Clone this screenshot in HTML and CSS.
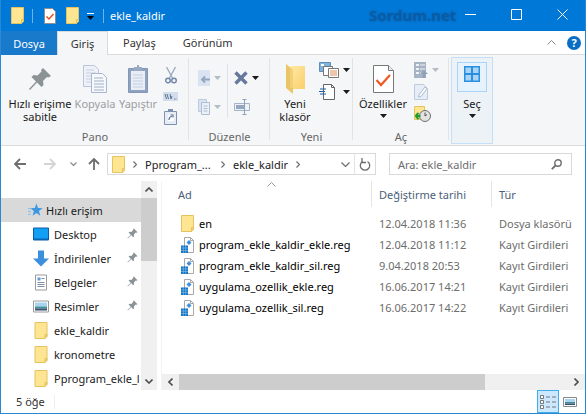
FILE: index.html
```html
<!DOCTYPE html>
<html lang="tr">
<head>
  <meta charset="UTF-8" />
  <title>ekle_kaldir</title>
  <link rel="stylesheet" href="styles.css">
</head>
<body>

  <!-- shared icons -->
  <svg class="defs">
    <symbol id="folder" viewBox="0 0 13 17">
      <path d="M.5.500h12v14h-2v2H.5z" fill="#fde592" stroke="#e6c35e"/>
      <path d="M10.500 16.500v-4h2v2z" fill="#f3d27a" stroke="#e6c35e"/>
    </symbol>
    <symbol id="reg" viewBox="0 0 13 16">
      <path d="M3.500.500h6l3 3v12h-9z" fill="#fff" stroke="#a8a8a8"/>
      <path d="M9.500.5v3h3" fill="none" stroke="#a8a8a8"/>
      <path d="M8 3l2.500 2.500-2.500 2.500-2.500-2.500z" fill="#3c8fd8"/>
      <path d="M0 8.500h7v7.500H0z" fill="#1273c4"/>
      <path d="M2.300 8.500v7.500M4.700 8.500v7.500M0 11h7M0 13.500h7" stroke="#8cc4ee" stroke-width=".6"/>
    </symbol>
    <symbol id="pin" viewBox="0 0 24 24">
      <path d="M15 1l8 8-2.500 1.500-1.500-.5-4 4 .5 4-2 2-4.500-4.500L2 23l-1-1 7-7.500L3.500 10l2-2 4 .5 4-4-.5-1.500z" fill="#8c9396"/>
    </symbol>
    <symbol id="caret" viewBox="0 0 7 4">
      <path d="M0 0h7L3.500 4z" fill="#1a1a1a"/>
    </symbol>
    <symbol id="caret-off" viewBox="0 0 7 4">
      <path d="M0 0h7L3.500 4z" fill="#b4bcc6"/>
    </symbol>
  </svg>

  <div class="window">

    <!-- Title bar -->
    <div class="titlebar">
      <svg class="qa-folder"><use href="#folder"/></svg>
      <span class="qa-sep"></span>
      <svg class="qa-doc" viewBox="0 0 12 16">
        <path d="M.5.500h8l3 3v12H.5z" fill="#fff" stroke="#8f8f8f"/>
        <path d="M2.500 8.500l2.500 2.500 4.500-5" fill="none" stroke="#e0531f" stroke-width="1.500"/>
      </svg>
      <svg class="qa-folder2"><use href="#folder"/></svg>
      <svg class="qa-drop" viewBox="0 0 7 8">
        <path d="M0 0h7v1H0z" fill="#fff"/>
        <path d="M0 3h7L3.500 7z" fill="#000"/>
      </svg>
      <span class="qa-sep qa-sep2"></span>
      <span class="title-text">ekle_kaldir</span>
      <span class="watermark">Sordum.net</span>
      <div class="winbtns">
        <svg viewBox="0 0 11 11"><path d="M0 5.500h11" stroke="#fff"/></svg>
        <svg viewBox="0 0 11 11"><path d="M.5.500h10v10H.5z" fill="none" stroke="#fff"/></svg>
        <svg viewBox="0 0 11 11"><path d="M.5.500l10 10M10.500.5l-10 10" stroke="#fff"/></svg>
      </div>
    </div>

    <!-- Tabs -->
    <div class="tabs">
      <div class="tab tab-file">Dosya</div>
      <div class="tab tab-active">Giriş</div>
      <div class="tab tab-share">Paylaş</div>
      <div class="tab tab-view">Görünüm</div>
      <svg class="collapse" viewBox="0 0 9 5"><path d="M.5 4.500l4-4 4 4" fill="none" stroke="#8a8a8a"/></svg>
      <div class="help">?</div>
    </div>

    <!-- Ribbon -->
    <div class="ribbon">

      <div class="group group-pano">
        <div class="group-body">
          <div class="tool tool-pin">
            <div class="tool-icon"><svg class="icon-24"><use href="#pin"/></svg></div>
            <span>Hızlı erişime sabitle</span>
          </div>
          <div class="tool tool-copy off">
            <div class="tool-icon">
              <svg class="icon-copy" viewBox="0 0 24 28">
                <path d="M.5.500h11l4 4v17H.5z" fill="#eef2f8" stroke="#b9c6da"/>
                <path d="M3 5h8M3 8h10M3 11h10M3 14h10M3 17h10" stroke="#c6d0e0"/>
                <path d="M8.500 8.500h11l4 4v15h-15z" fill="#f6f8fb" stroke="#a9b8d0"/>
                <path d="M11 13h9M11 16h10M11 19h10M11 22h10M11 25h10" stroke="#9fb0ca"/>
              </svg>
            </div>
            <span>Kopyala</span>
          </div>
          <div class="tool tool-paste off">
            <div class="tool-icon">
              <svg class="icon-paste" viewBox="0 0 20 28">
                <path d="M.5 3.500h19v24H.5z" fill="#8fa2c0" stroke="#8397b7"/>
                <path d="M3 6h14v19H3z" fill="#e9eef6"/>
                <path d="M5 10h10M5 13h10M5 16h10M5 19h10M5 22h10" stroke="#c3cfe2"/>
                <path d="M6 2h3V0h2v2h3v4H6z" fill="#9aaac4"/>
              </svg>
            </div>
            <span>Yapıştır</span>
          </div>
          <div class="small-col small-pano">
            <svg class="icon-cut" viewBox="0 0 12 17">
              <path d="M1.500 0l6 11M10.500 0l-6 11" stroke="#9aa8bd" stroke-width="1.300" fill="none"/>
              <circle cx="3" cy="13.500" r="2.300" fill="none" stroke="#6f86a8" stroke-width="1.400"/>
              <circle cx="9" cy="13.500" r="2.300" fill="none" stroke="#6f86a8" stroke-width="1.400"/>
            </svg>
            <svg class="icon-path" viewBox="0 0 15 9">
              <path d="M0 0h15v9H0z" fill="#d3ddeb"/>
              <path d="M2 2l1.500 5M4 2l1.500 5M7 2l1 5 1-3" fill="none" stroke="#5c7496"/>
              <path d="M11 7h.8M12.500 7h.8" stroke="#5c7496"/>
            </svg>
            <svg class="icon-short" viewBox="0 0 13 16">
              <path d="M.5 2.500h12v13H.5z" fill="#e8edf5" stroke="#7d92b2"/>
              <path d="M4 0h5v3H4z" fill="#7d92b2"/>
              <path d="M4 6h6v6H4z" fill="#fff"/>
              <path d="M5 11c0-2.500 1-3.500 3-3.500M6.500 6h2.500v2.500" fill="none" stroke="#5a7398" stroke-width="1.200"/>
            </svg>
          </div>
        </div>
        <div class="group-label">Pano</div>
      </div>

      <div class="group group-edit">
        <div class="group-body">
          <div class="small-col edit-col">
            <div class="small-row">
              <svg class="icon-16" viewBox="0 0 12 16">
                <path d="M0 0h12v16H0z" fill="#d9e3f1"/>
                <path d="M4 9.500h8M7 6.500l-3 3 3 3" fill="none" stroke="#93a5bf" stroke-width="1.800"/>
              </svg>
              <svg class="caret-7"><use href="#caret-off"/></svg>
            </div>
            <div class="small-row">
              <svg class="icon-16" viewBox="0 0 12 16">
                <path d="M.5.500h8v12h-8z" fill="#d9e3f1" stroke="#bccadd"/>
                <path d="M3.500 3.500h8v12h-8z" fill="#eaf0f7" stroke="#aebed4"/>
                <path d="M5.500 7h4M5.500 9.500h4M5.500 12h4" stroke="#aebed4"/>
              </svg>
              <svg class="caret-7"><use href="#caret-off"/></svg>
            </div>
          </div>
          <span class="vsep"></span>
          <div class="small-col edit-col2">
            <div class="small-row">
              <svg class="icon-x" viewBox="0 0 14 14">
                <path d="M1.500 1.500l11 11M12.500 1.500l-11 11" stroke="#66799d" stroke-width="3.400"/>
              </svg>
              <svg class="caret-7"><use href="#caret"/></svg>
            </div>
            <div class="small-row">
              <svg class="icon-rename" viewBox="0 0 16 16">
                <path d="M.5 4.500h15v7H.5z" fill="#eef2f7" stroke="#a5b3c7"/>
                <path d="M2 6h8v4H2z" fill="#94a6c0"/>
                <path d="M10.500 0v16M8.500.5h4M8.500 15.500h4" fill="none" stroke="#8ea0ba"/>
              </svg>
            </div>
          </div>
        </div>
        <div class="group-label">Düzenle</div>
      </div>

      <div class="group group-new">
        <div class="group-body">
          <div class="tool tool-newfolder">
            <div class="tool-icon">
              <svg class="icon-bigfolder" viewBox="0 0 19 30">
                <defs>
                  <linearGradient id="folderFill" x1="0" y1="0" x2="1" y2="1">
                    <stop offset="0" stop-color="#ffe9a6"/>
                    <stop offset="1" stop-color="#f9cf6b"/>
                  </linearGradient>
                </defs>
                <path d="M4 2h15v23H4z" fill="url(#folderFill)"/>
                <path d="M0 0l7 6v24l-7-6z" fill="#eac567"/>
                <path d="M4 3l3 3v18H4z" fill="#f3d077"/>
              </svg>
            </div>
            <span>Yeni klasör</span>
          </div>
          <div class="small-col new-col">
            <div class="small-row">
              <svg class="icon-20" viewBox="0 0 20 16">
                <path d="M.5.500h11v9H.5z" fill="#7fb3de" stroke="#5f8fb8"/>
                <path d="M2 2h3v2H2z" fill="#fff"/>
                <path d="M4.500 4.500h9v9h-9z" fill="#fff" stroke="#777"/>
                <path d="M9.500 6.500h10v9h-10z" fill="#fff" stroke="#777"/>
                <path d="M11 9h7M11 11h7M11 13h7" stroke="#e08a5b"/>
              </svg>
              <svg class="caret-7"><use href="#caret"/></svg>
            </div>
            <div class="small-row">
              <svg class="icon-20" viewBox="0 0 20 16">
                <path d="M4.500.500h8l3 3v12h-11z" fill="#fff" stroke="#666"/>
                <path d="M12.500.5v3h3" fill="none" stroke="#666"/>
                <path d="M1 5h6M0 7.500h6M1 10h6" stroke="#1d5fa8"/>
              </svg>
              <svg class="caret-7"><use href="#caret"/></svg>
            </div>
          </div>
        </div>
        <div class="group-label">Yeni</div>
      </div>

      <div class="group group-open">
        <div class="group-body">
          <div class="tool tool-props">
            <div class="tool-icon">
              <svg class="icon-props" viewBox="0 0 21 28">
                <path d="M.5.500h15l5 5v22H.5z" fill="#fff" stroke="#777"/>
                <path d="M15.500.5v5h5" fill="#eee" stroke="#777"/>
                <path d="M3.500 15l4.500 5 9-10" fill="none" stroke="#ee5a24" stroke-width="2.200"/>
              </svg>
            </div>
            <span>Özellikler</span>
            <svg class="caret-7 tool-caret"><use href="#caret"/></svg>
          </div>
          <div class="small-col open-col">
            <div class="small-row">
              <svg class="icon-16b" viewBox="0 0 14 16">
                <path d="M0 0h12v16H0z" fill="#a7b4c6"/>
                <path d="M2 2h3v2H2zM2 6h3v2H2zM2 10h3v2H2z" fill="#eef2f7"/>
                <path d="M6 3h5M6 7h5M6 11h3" stroke="#eef2f7"/>
                <path d="M10 8l4 4h-2.500v4h-3v-4H6z" fill="#8fa0b8"/>
              </svg>
              <svg class="caret-7"><use href="#caret-off"/></svg>
            </div>
            <svg class="icon-14" viewBox="0 0 14 16">
              <path d="M.5.500h9l4 4v11H.5z" fill="#e6edf6" stroke="#bccadd"/>
              <path d="M5 11L11 3l2 1.500-6 8-2.500.5z" fill="#fff" stroke="#a9bad2"/>
            </svg>
            <svg class="icon-hist" viewBox="0 0 17 16">
              <path d="M.5.500h10v13H.5z" fill="#fde592" stroke="#e6c35e"/>
              <circle cx="11" cy="10" r="5.500" fill="#e3e3e3" stroke="#6f6f6f"/>
              <path d="M11 6.500V10l2-1.500" fill="none" stroke="#555"/>
              <path d="M1.500 10h5M1.500 10l3-3M1.500 10l3 3" fill="none" stroke="#1f9d2f" stroke-width="2"/>
            </svg>
          </div>
        </div>
        <div class="group-label">Aç</div>
      </div>

      <div class="group-select">
        <div class="select-box">
          <svg class="icon-16" viewBox="0 0 16 16">
            <path d="M0 0h16v16H0z" fill="#2a8fdc"/>
            <path d="M1.500 1.500h5.500v5.500H1.500zM9 1.500h5.500v5.500H9zM1.500 9h5.500v5.500H1.500zM9 9h5.500v5.500H9z" fill="#a9d4f5"/>
          </svg>
        </div>
        <span>Seç</span>
        <svg class="caret-7 tool-caret"><use href="#caret"/></svg>
      </div>
    </div>

    <!-- Address row -->
    <div class="addressrow">
      <svg class="nav-arrow" viewBox="0 0 12 12"><path d="M12 6H1.500M6 1L1 6l5 5" fill="none" stroke="#6e6e6e" stroke-width="1.800"/></svg>
      <svg class="nav-arrow nav-forward" viewBox="0 0 12 12"><path d="M0 6h10.500M6 1l5 5-5 5" fill="none" stroke="#d4d4d4" stroke-width="1.800"/></svg>
      <svg class="nav-down" viewBox="0 0 7 4"><path d="M.5.500l3 3 3-3" fill="none" stroke="#8a8a8a" stroke-width="1.200"/></svg>
      <svg class="nav-arrow nav-up" viewBox="0 0 12 12"><path d="M6 12V1.500M1 6l5-5 5 5" fill="none" stroke="#6e6e6e" stroke-width="1.800"/></svg>
      <div class="address">
        <svg class="addr-folder"><use href="#folder"/></svg>
        <svg class="crumb-sep" viewBox="0 0 4 7"><path d="M.5.500l3 3-3 3" fill="none" stroke="#6a6a6a" stroke-width="1.200"/></svg>
        <span class="crumb crumb-first">Pprogram_...</span>
        <svg class="crumb-sep" viewBox="0 0 4 7"><path d="M.5.500l3 3-3 3" fill="none" stroke="#6a6a6a" stroke-width="1.200"/></svg>
        <span class="crumb">ekle_kaldir</span>
        <svg class="crumb-sep" viewBox="0 0 4 7"><path d="M.5.500l3 3-3 3" fill="none" stroke="#6a6a6a" stroke-width="1.200"/></svg>
        <svg class="addr-down" viewBox="0 0 9 5"><path d="M.5.500l4 4 4-4" fill="none" stroke="#6e6e6e" stroke-width="1.200"/></svg>
        <span class="addr-sep"></span>
        <svg class="addr-refresh" viewBox="0 0 12 13">
          <path d="M3.500 3.500a4.700 4.700 0 1 0 5 0" fill="none" stroke="#6e6e6e" stroke-width="1.300"/>
          <path d="M3 0v4.500h4" fill="none" stroke="#6e6e6e" stroke-width="1.300"/>
        </svg>
      </div>
      <div class="search">
        <span>Ara: ekle_kaldir</span>
        <svg class="search-icon" viewBox="0 0 11 11">
          <circle cx="7" cy="4" r="3.200" fill="none" stroke="#6e6e6e" stroke-width="1.400"/>
          <path d="M4.500 6.500L.8 10.200" stroke="#6e6e6e" stroke-width="1.800"/>
        </svg>
      </div>
    </div>

    <!-- Main -->
    <div class="main">
      <div class="navpane">
        <div class="navlist">
          <div class="navrow navrow-sel">
            <svg class="nav-icon nav-star" viewBox="0 0 16 16">
              <path d="M9 .5l1.700 4.800 5 .2-4 3.100 1.400 4.900L9 10.700 4.900 13.500l1.400-4.900-4-3.100 5-.2z" fill="#3d97e0"/>
              <path d="M0 6h4M0 9h3M0 12h3" stroke="#7cbcec"/>
            </svg>
            <span>Hızlı erişim</span>
          </div>
          <div class="navrow">
            <svg class="nav-icon" viewBox="0 0 16 16">
              <path d="M.5 1.500h15v12H.5z" fill="#12a0f5" stroke="#0a5da8"/>
              <path d="M1 12h14v1.500H1z" fill="#0a64b4"/>
            </svg>
            <span>Desktop</span>
            <svg class="nav-pin"><use href="#pin"/></svg>
          </div>
          <div class="navrow">
            <svg class="nav-icon" viewBox="0 0 16 16">
              <path d="M5 0h6v8h5l-8 8-8-8h5z" fill="#3b8fdc"/>
            </svg>
            <span>İndirilenler</span>
            <svg class="nav-pin"><use href="#pin"/></svg>
          </div>
          <div class="navrow">
            <svg class="nav-icon" viewBox="0 0 16 16">
              <path d="M2.500.5h11v15h-11z" fill="#fff" stroke="#9a9a9a"/>
              <path d="M4.500 3h3v3h-3z" fill="#5a9bd8"/>
              <path d="M8.500 4h3M4.500 8h7M4.500 10h7M4.500 12h7" stroke="#7f8fa3"/>
            </svg>
            <span>Belgeler</span>
            <svg class="nav-pin"><use href="#pin"/></svg>
          </div>
          <div class="navrow">
            <svg class="nav-icon" viewBox="0 0 16 16">
              <path d="M.5 2.500h15v11H.5z" fill="#fff" stroke="#9a9a9a"/>
              <path d="M2 4h12v4H2z" fill="#a9d4ef"/>
              <path d="M2 8h12v2H2z" fill="#3f8f9a"/>
              <path d="M2 10h12v2H2z" fill="#39506e"/>
            </svg>
            <span>Resimler</span>
            <svg class="nav-pin"><use href="#pin"/></svg>
          </div>
          <div class="navrow">
            <svg class="nav-icon"><use href="#folder"/></svg>
            <span>ekle_kaldir</span>
          </div>
          <div class="navrow">
            <svg class="nav-icon"><use href="#folder"/></svg>
            <span>kronometre</span>
          </div>
          <div class="navrow">
            <svg class="nav-icon"><use href="#folder"/></svg>
            <span>Pprogram_ekle_l</span>
          </div>
        </div>
        <div class="vscroll">
          <div class="sb-btn">
            <svg viewBox="0 0 8 5"><path d="M.5 4.500L4 1l3.500 3.500" fill="none" stroke="#505050" stroke-width="1.600"/></svg>
          </div>
          <div class="sb-thumb"></div>
          <div class="sb-track"></div>
          <div class="sb-btn">
            <svg viewBox="0 0 8 5"><path d="M.5.500L4 4 7.500.5" fill="none" stroke="#505050" stroke-width="1.600"/></svg>
          </div>
        </div>
      </div>

      <div class="filepane">
        <div class="colhead">
          <div class="col col-name">Ad</div>
          <div class="col col-date">Değiştirme tarihi</div>
          <div class="col col-type">Tür</div>
          <svg class="sort-caret" viewBox="0 0 9 5"><path d="M.5 4.500l4-4 4 4" fill="none" stroke="#9a9a9a"/></svg>
        </div>
        <div class="files">
          <div class="filerow">
            <div class="col-name fname"><svg class="file-folder"><use href="#folder"/></svg><span>en</span></div>
            <div class="col-date fmeta">12.04.2018 11:36</div>
            <div class="col-type fmeta">Dosya klasörü</div>
          </div>
          <div class="filerow">
            <div class="col-name fname"><svg class="file-reg"><use href="#reg"/></svg><span>program_ekle_kaldir_ekle.reg</span></div>
            <div class="col-date fmeta">12.04.2018 11:12</div>
            <div class="col-type fmeta">Kayıt Girdileri</div>
          </div>
          <div class="filerow">
            <div class="col-name fname"><svg class="file-reg"><use href="#reg"/></svg><span>program_ekle_kaldir_sil.reg</span></div>
            <div class="col-date fmeta">9.04.2018 20:53</div>
            <div class="col-type fmeta">Kayıt Girdileri</div>
          </div>
          <div class="filerow">
            <div class="col-name fname"><svg class="file-reg"><use href="#reg"/></svg><span>uygulama_ozellik_ekle.reg</span></div>
            <div class="col-date fmeta">16.06.2017 14:21</div>
            <div class="col-type fmeta">Kayıt Girdileri</div>
          </div>
          <div class="filerow">
            <div class="col-name fname"><svg class="file-reg"><use href="#reg"/></svg><span>uygulama_ozellik_sil.reg</span></div>
            <div class="col-date fmeta">16.06.2017 14:22</div>
            <div class="col-type fmeta">Kayıt Girdileri</div>
          </div>
        </div>
        <div class="hscroll">
          <div class="hs-btn">
            <svg viewBox="0 0 5 8"><path d="M4.500.5L1 4l3.500 3.500" fill="none" stroke="#505050" stroke-width="1.600"/></svg>
          </div>
          <div class="hs-thumb"></div>
          <div class="hs-track"></div>
          <div class="hs-btn">
            <svg viewBox="0 0 5 8"><path d="M.5.5L4 4 .5 7.500" fill="none" stroke="#505050" stroke-width="1.600"/></svg>
          </div>
        </div>
      </div>
    </div>

    <!-- Status bar -->
    <div class="statusbar">
      <span class="status-text">5 öğe</span>
      <span class="status-sep"></span>
      <div class="view-btn view-btn-on">
        <svg viewBox="0 0 16 14">
          <path d="M.5.500h3v3h-3zM.5 5.500h3v3h-3zM.5 10.500h3v3h-3z" fill="#fff" stroke="#777"/>
          <path d="M6 2h4M12 2h4M6 7h4M12 7h4M6 12h4M12 12h4" stroke="#777"/>
        </svg>
      </div>
      <div class="view-btn">
        <svg viewBox="0 0 14 10">
          <path d="M.5.500h13v9H.5z" fill="#fff" stroke="#8a8a8a"/>
          <path d="M2 2h10v3H2z" fill="#a9d4ef"/>
          <path d="M2 5h10v1.500H2z" fill="#3f8f9a"/>
          <path d="M2 6.500h10V8H2z" fill="#39506e"/>
        </svg>
      </div>
    </div>

  </div>

</body>
</html>
```

FILE: styles.css
```css
* {
  box-sizing: border-box;
}

body {
  margin: 0;
  font-family: "Noto Sans", "Open Sans", sans-serif;
  font-size: 11px;
  color: #1a1a1a;
  background: white;
}

svg {
  display: block;
  flex-shrink: 0;
}

.defs {
  display: none;
}

.window {
  width: 586px;
  height: 414px;
  border: 1px solid #2a88d2;
  border-top: 0;
  display: flex;
  flex-direction: column;
  overflow: hidden;
}

/* Title bar */
.titlebar {
  height: 31px;
  margin: 0 -1px;
  background: #0078d7;
  color: white;
  display: flex;
  align-items: center;
  padding-left: 11px;
}

.qa-folder,
.qa-folder2 {
  width: 13px;
  height: 17px;
}

.qa-sep {
  width: 1px;
  height: 14px;
  background: #6db2e8;
  margin: 0 11px 0 8px;
}

.qa-doc {
  width: 12px;
  height: 16px;
}

.qa-folder2 {
  margin-left: 10px;
}

.qa-drop {
  width: 7px;
  height: 8px;
  margin-left: 8px;
  margin-top: 3px;
}

.qa-sep2 {
  margin: 0 6px 0 9px;
}

.watermark {
  margin-left: 204px;
  margin-top: -2px;
  font-weight: bold;
  font-size: 15px;
  color: #0a5ca6;
  text-shadow: 0 0 2px #0a5ca6;
}

.winbtns {
  margin-left: auto;
  display: flex;
  gap: 35px;
  padding-right: 18px;
  margin-top: -2px;
}

.winbtns svg {
  width: 11px;
  height: 11px;
}

/* Tabs */
.tabs {
  height: 24px;
  display: flex;
  align-items: stretch;
  border-bottom: 1px solid #dadbdc;
  background: white;
}

.tab {
  display: flex;
  align-items: center;
  justify-content: center;
  color: #333;
}

.tab-file {
  width: 56px;
  background: #1979ca;
  color: white;
  margin-bottom: -1px;
}

.tab-active {
  width: 51px;
  background: #f5f6f7;
  border: 1px solid #dadbdc;
  border-bottom: 0;
  margin-bottom: -1px;
  z-index: 1;
}

.tab-share {
  margin-left: 15px;
}

.tab-view {
  margin-left: 27px;
}

.collapse {
  width: 9px;
  height: 5px;
  margin-left: auto;
  align-self: center;
  margin-right: 11px;
}

.help {
  width: 14px;
  height: 14px;
  border-radius: 50%;
  background: #0a6fc4;
  color: white;
  font-size: 11px;
  font-weight: bold;
  line-height: 14px;
  text-align: center;
  align-self: center;
  margin-right: 4px;
}

/* Ribbon */
.ribbon {
  height: 91px;
  background: #f5f6f7;
  border-bottom: 1px solid #dadbdc;
  display: flex;
}

.group {
  display: flex;
  flex-direction: column;
  position: relative;
}

.group::after {
  content: "";
  position: absolute;
  right: 0;
  top: 3px;
  bottom: 5px;
  width: 1px;
  background: #e1e3e6;
}

.group-body {
  flex: 1;
  display: flex;
  padding-top: 5px;
}

.group-label {
  height: 16px;
  line-height: 16px;
  text-align: center;
  color: #666;
}

.group-pano { width: 188px; }
.group-edit { width: 81px; }
.group-new { width: 83px; }
.group-open { width: 96px; }

.tool {
  display: flex;
  flex-direction: column;
  align-items: center;
  text-align: center;
  line-height: 13px;
}

.tool-icon {
  height: 37px;
  display: flex;
  align-items: center;
  justify-content: center;
}

.tool.off {
  color: #9a9ea3;
}

.tool-pin { width: 66px; margin-left: 6px; }
.tool-copy { width: 44px; }
.tool-paste { width: 42px; }

.tool-caret {
  margin-top: 4px;
}

.icon-24 {
  width: 24px;
  height: 24px;
}

.icon-copy {
  width: 24px;
  height: 28px;
}

.icon-paste {
  width: 20px;
  height: 28px;
}

.small-col {
  display: flex;
  flex-direction: column;
  align-items: center;
}

.small-row {
  display: flex;
  align-items: center;
  gap: 4px;
}

.small-pano {
  width: 23px;
  gap: 8px;
  padding-top: 7px;
}

.icon-cut { width: 12px; height: 17px; }
.icon-path { width: 15px; height: 9px; }
.icon-short { width: 13px; height: 16px; }

.icon-16 {
  width: 12px;
  height: 16px;
}

.caret-7 {
  width: 7px;
  height: 4px;
}

.edit-col {
  width: 29px;
  margin-left: 9px;
  padding-top: 10px;
  gap: 13px;
  align-items: flex-start;
}

.vsep {
  width: 1px;
  height: 54px;
  background: #dfe1e4;
  margin: 4px 6px 0 0;
}

.edit-col2 {
  padding-top: 10px;
  gap: 13px;
  align-items: flex-start;
}

.icon-x {
  width: 14px;
  height: 14px;
  margin-top: 1px;
  margin-bottom: 1px;
}

.icon-rename {
  width: 16px;
  height: 16px;
}

.tool-newfolder {
  width: 40px;
  margin-left: 5px;
}

.icon-bigfolder {
  width: 19px;
  height: 30px;
}

.new-col {
  margin-left: 4px;
  padding-top: 2px;
  gap: 6px;
  align-items: flex-start;
}

.icon-20 {
  width: 20px;
  height: 16px;
}

.tool-props {
  width: 56px;
  margin-left: 2px;
}

.icon-props {
  width: 21px;
  height: 28px;
}

.open-col {
  margin-left: 3px;
  padding-top: 2px;
  gap: 6px;
  align-items: flex-start;
}

.icon-16b { width: 14px; height: 16px; }
.icon-14 { width: 14px; height: 16px; }
.icon-hist { width: 17px; height: 16px; }

.group-select {
  width: 42px;
  height: 87px;
  margin: 2px 0 0 2px;
  background: #edf2f7;
  border: 1px solid #c4dff8;
  display: flex;
  flex-direction: column;
  align-items: center;
  padding-top: 4px;
  line-height: 13px;
}

.select-box {
  width: 30px;
  height: 30px;
  background: #e6f2fc;
  border: 1px solid #a9d4f7;
  display: flex;
  align-items: flex-start;
  justify-content: center;
  padding-top: 3px;
  margin-bottom: 5px;
}

.select-box svg {
  width: 16px;
  height: 16px;
}

/* Address row */
.addressrow {
  height: 35px;
  display: flex;
  align-items: center;
  background: white;
  padding: 1px 13px 0;
}

.nav-arrow {
  width: 12px;
  height: 12px;
}

.nav-forward {
  margin-left: 18px;
}

.nav-down {
  width: 7px;
  height: 4px;
  margin-left: 14px;
}

.nav-up {
  margin-left: 11px;
}

.address {
  width: 269px;
  height: 22px;
  margin-left: 7px;
  border: 1px solid #d9d9d9;
  display: flex;
  align-items: center;
  padding-left: 4px;
}

.addr-folder {
  width: 13px;
  height: 17px;
}

.crumb-sep {
  width: 4px;
  height: 7px;
  margin: 0 8px;
}

.crumb-first {
  width: 68px;
}

.addr-down {
  width: 9px;
  height: 5px;
  margin-left: auto;
}

.addr-sep {
  width: 1px;
  height: 20px;
  background: #e3e3e3;
  margin: 0 4px;
}

.addr-refresh {
  width: 12px;
  height: 13px;
  margin-right: 4px;
}

.search {
  width: 183px;
  height: 22px;
  margin-left: 13px;
  border: 1px solid #d9d9d9;
  display: flex;
  align-items: center;
  justify-content: space-between;
  padding: 0 9px 0 8px;
  color: #6d6d6d;
}

.search-icon {
  width: 11px;
  height: 11px;
}

/* Main */
.main {
  flex: 1;
  display: flex;
  min-height: 0;
  background: white;
}

.navpane {
  width: 157px;
  display: flex;
}

.navlist {
  width: 140px;
  padding-top: 17px;
  overflow: hidden;
}

.navrow {
  height: 24px;
  display: flex;
  align-items: center;
  padding-left: 32px;
  white-space: nowrap;
  position: relative;
}

.navrow span {
  margin-left: 5px;
}

.navrow-sel {
  background: #d9d9d9;
  padding-left: 27px;
}

.navrow-sel span {
  margin-left: 3px;
}

.nav-icon {
  width: 16px;
  height: 17px;
}

.nav-star {
  width: 15px;
  height: 15px;
}

.nav-pin {
  width: 11px;
  height: 11px;
  position: absolute;
  right: 3px;
  top: 6px;
}

.vscroll {
  width: 16px;
  display: flex;
  flex-direction: column;
  background: #f0f0f0;
}

.sb-btn {
  height: 17px;
  display: flex;
  align-items: center;
  justify-content: center;
}

.sb-btn svg {
  width: 8px;
  height: 5px;
}

.sb-thumb {
  height: 63px;
  background: #cdcdcd;
}

.sb-track {
  flex: 1;
}

.filepane {
  flex: 1;
  margin-left: 3px;
  border-left: 1px solid #f2f2f2;
  display: flex;
  flex-direction: column;
  min-width: 0;
  position: relative;
}

.colhead {
  height: 26px;
  display: flex;
  color: #4c607a;
}

.col {
  display: flex;
  align-items: center;
  padding-left: 7px;
  border-right: 1px solid #e5e5e5;
}

.col-name {
  width: 210px;
}

.col.col-name {
  padding-left: 16px;
}

.col-date {
  width: 120px;
}

.col-type {
  flex: 1;
  border-right: 0;
}

.sort-caret {
  width: 9px;
  height: 5px;
  position: absolute;
  left: 105px;
  top: 1px;
}

.files {
  flex: 1;
  padding-top: 6px;
}

.filerow {
  height: 21px;
  display: flex;
  align-items: center;
}

.fname {
  display: flex;
  align-items: center;
  padding-left: 19px;
  color: #000;
  white-space: nowrap;
}

.fname span {
  margin-left: 5px;
}

.fmeta {
  padding-left: 7px;
  color: #6d6d6d;
  white-space: nowrap;
}

.file-folder {
  width: 13px;
  height: 17px;
}

.file-reg {
  width: 13px;
  height: 16px;
}

.hscroll {
  height: 16px;
  display: flex;
  background: #f0f0f0;
}

.hs-btn {
  width: 17px;
  display: flex;
  align-items: center;
  justify-content: center;
}

.hs-btn svg {
  width: 5px;
  height: 8px;
}

.hs-thumb {
  width: 306px;
  background: #cdcdcd;
}

.hs-track {
  flex: 1;
}

/* Status bar */
.statusbar {
  height: 23px;
  display: flex;
  align-items: center;
  background: white;
  color: #333;
}

.status-text {
  margin-left: 15px;
}

.status-sep {
  width: 1px;
  height: 14px;
  background: #eeeeee;
  margin-left: 9px;
}

.view-btn {
  width: 22px;
  height: 23px;
  display: flex;
  align-items: center;
  justify-content: center;
}

.view-btn svg {
  width: 16px;
  height: 14px;
}

.view-btn-on {
  margin-left: auto;
  background: #cce8ff;
  border: 1px solid #3daee9;
}

.view-btn:last-child {
  margin-right: 4px;
}

.view-btn:last-child svg {
  height: 10px;
}
```
